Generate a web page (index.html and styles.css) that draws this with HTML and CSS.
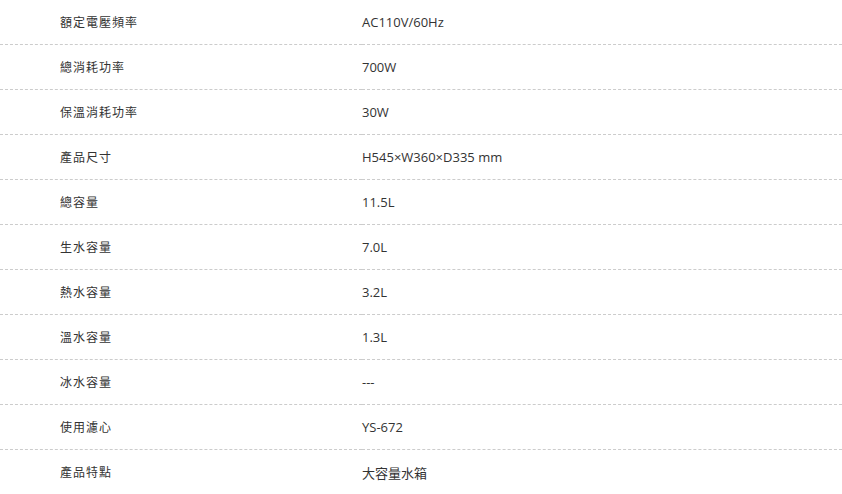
FILE: index.html
```html
<!DOCTYPE html>
<html lang="zh-Hant">
<head>
    <meta charset="UTF-8">
    <title>產品規格</title>
    <link rel="stylesheet" href="styles.css">
</head>
<body>
    <table class="spec">
        <tr><td class="label">額定電壓頻率</td><td class="value">AC110V/60Hz</td></tr>
        <tr><td class="label">總消耗功率</td><td class="value">700W</td></tr>
        <tr><td class="label">保溫消耗功率</td><td class="value">30W</td></tr>
        <tr><td class="label">產品尺寸</td><td class="value">H545×W360×D335 mm</td></tr>
        <tr><td class="label">總容量</td><td class="value">11.5L</td></tr>
        <tr><td class="label">生水容量</td><td class="value">7.0L</td></tr>
        <tr><td class="label">熱水容量</td><td class="value">3.2L</td></tr>
        <tr><td class="label">溫水容量</td><td class="value">1.3L</td></tr>
        <tr><td class="label">冰水容量</td><td class="value">---</td></tr>
        <tr><td class="label">使用濾心</td><td class="value">YS-672</td></tr>
        <tr><td class="label">產品特點</td><td class="value">大容量水箱</td></tr>
    </table>
</body>
</html>
```

FILE: styles.css
```css
body {
    margin: 0;
    background-color: #fff;
    font-family: "Open Sans", "Noto Sans CJK TC", sans-serif;
    color: #333;
}

/* tableau des specifications */
.spec {
    width: 100%;
    border-collapse: collapse;
}

.spec td {
    height: 44px;
    padding: 0;
    border-bottom: 1px dashed #ccc;
    vertical-align: middle;
}

.spec tr:last-child td {
    border-bottom: none;
}

.label {
    width: 362px;
    padding-left: 60px !important;
    box-sizing: border-box;
    font-size: 12px;
    letter-spacing: 1px;
}

.value {
    font-size: 13px;
}
```
